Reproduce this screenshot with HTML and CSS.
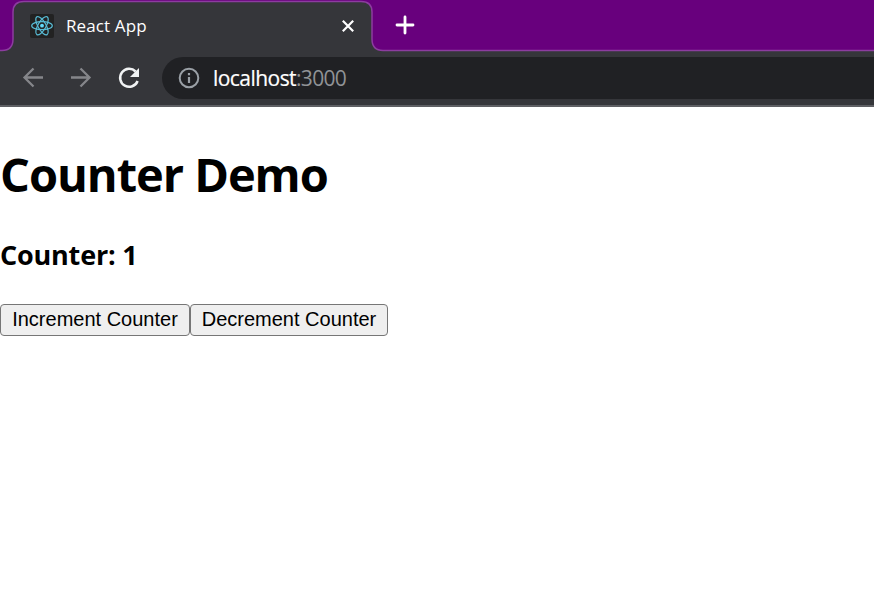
FILE: index.html
```html
<!DOCTYPE html>
<html lang="en">
<head>
<meta charset="utf-8">
<title>React App</title>
<link rel="stylesheet" href="styles.css">
</head>
<body>
<header class="browser">
  <div class="tab-strip">
    <svg class="tab-shape" width="874" height="52" viewBox="0 0 874 52" aria-hidden="true">
      <path d="M-2 50.5H2Q13 50.500 13 39V12Q13 1.500 24 1.500H361Q372 1.500 372 12V39Q372 50.500 383 50.500H876V54H-2Z" fill="#35363a" stroke="#8c3d9f" stroke-width="1.500"/>
    </svg>
    <div class="tab">
      <svg class="favicon" width="24" height="24" viewBox="0 0 24 24" fill="none" aria-hidden="true">
        <rect width="24" height="24" rx="2" fill="#222"/>
        <g stroke="#58bcd6" stroke-width="1.200">
          <ellipse cx="12" cy="11.700" rx="10.300" ry="4"/>
          <ellipse cx="12" cy="11.700" rx="10.300" ry="4" transform="rotate(60 12 11.700)"/>
          <ellipse cx="12" cy="11.700" rx="10.300" ry="4" transform="rotate(120 12 11.700)"/>
        </g>
        <circle cx="12" cy="11.700" r="1.900" fill="#61dafb"/>
      </svg>
      <span class="tab-title">React App</span>
      <svg class="close" width="14" height="14" viewBox="0 0 14 14" aria-hidden="true"><path d="M1.800 1.800L12.200 12.200M12.200 1.800L1.800 12.200" stroke="#fff" stroke-width="2.200"/></svg>
    </div>
    <svg class="new-tab" width="20" height="20" viewBox="0 0 20 20" aria-hidden="true"><path d="M10 2V18M2 10H18" stroke="#fff" stroke-width="2.800" stroke-linecap="round"/></svg>
  </div>
  <div class="toolbar">
    <svg class="nav" width="24" height="24" viewBox="0 0 24 24" fill="none" stroke="#85868a" stroke-width="2.300" aria-hidden="true"><path d="M22 11.500H3.500M12.500 2.500L3.500 11.500L12.500 20.500"/></svg>
    <svg class="nav" width="24" height="24" viewBox="0 0 24 24" fill="none" stroke="#85868a" stroke-width="2.300" aria-hidden="true"><path d="M2 11.500H20.500M11.500 2.500L20.500 11.500L11.500 20.500"/></svg>
    <svg class="nav" width="24" height="24" viewBox="0 0 24 24" aria-hidden="true"><path d="M18.600 5.500A9 9 0 1 0 20.600 15" fill="none" stroke="#f1f3f4" stroke-width="2.500"/><path d="M22 2V11H13Z" fill="#f1f3f4"/></svg>
    <div class="address">
      <svg class="info" width="22" height="22" viewBox="0 0 22 22" aria-hidden="true"><circle cx="11" cy="11" r="9.300" fill="none" stroke="#9aa0a6" stroke-width="2"/><path d="M11 6V8.200M11 10V16" stroke="#9aa0a6" stroke-width="2.200"/></svg>
      <span class="host">localhost</span><span class="port">:3000</span>
    </div>
  </div>
</header>
<main>
  <h1><span>Counter Demo</span></h1>
  <h3><span>Counter: 1</span></h3>
  <div class="actions"><button class="increment">Increment Counter</button><button class="decrement">Decrement Counter</button></div>
</main>
</body>
</html>
```
FILE: styles.css
```css
* { box-sizing: border-box; }
body { margin: 0; height: 601px; overflow: hidden; background: #fff; color: #000; font-family: "Open Sans", "Noto Sans", sans-serif; }
svg { display: block; flex: none; }
.browser { height: 107px; background: #35363a; border-bottom: 2px solid #5e5f63; }
.tab-strip { position: relative; display: flex; height: 51px; background: #68007d; }
.tab-shape { position: absolute; left: 0; top: 0; }
.tab { position: relative; display: flex; align-items: center; width: 359px; height: 52px; margin-left: 13px; padding: 0 17px; }
.tab-title { margin: 0 auto 0 12px; padding-bottom: 2px; color: #fff; font-size: 17px; letter-spacing: 0.12px; white-space: nowrap; }
.new-tab { position: relative; margin: 15px 0 0 23px; }
.toolbar { display: flex; align-items: center; height: 54px; padding-left: 21px; }
.nav { margin-right: 24px; }
.address { display: flex; align-items: center; flex: 1; height: 42px; margin-left: -3px; padding-left: 16px; border-radius: 21px 0 0 21px; background: #202124; color: #fff; font-size: 21px; white-space: nowrap; }
.info { margin-right: 13px; }
.host { letter-spacing: -0.55px; -webkit-text-stroke: 0.2px #fff; }
.port { color: #909396; letter-spacing: -0.7px; }
h1, h3 { margin: 0; font-weight: 700; white-space: nowrap; }
h1 { margin-top: 35px; font-size: 47px; line-height: 64px; letter-spacing: -1.05px; }
h3 { margin-top: 31px; font-size: 27px; line-height: 36px; letter-spacing: -0.2px; }
.actions { display: flex; margin-top: 31px; }
button { height: 32px; margin: 0; padding: 0 0 2px; border: 1px solid #767676; border-radius: 4px; background: #efefef; color: #000; font: 20px "Liberation Sans", Arial, sans-serif; white-space: nowrap; }
.increment { width: 190px; }
.decrement { width: 198px; }
```
